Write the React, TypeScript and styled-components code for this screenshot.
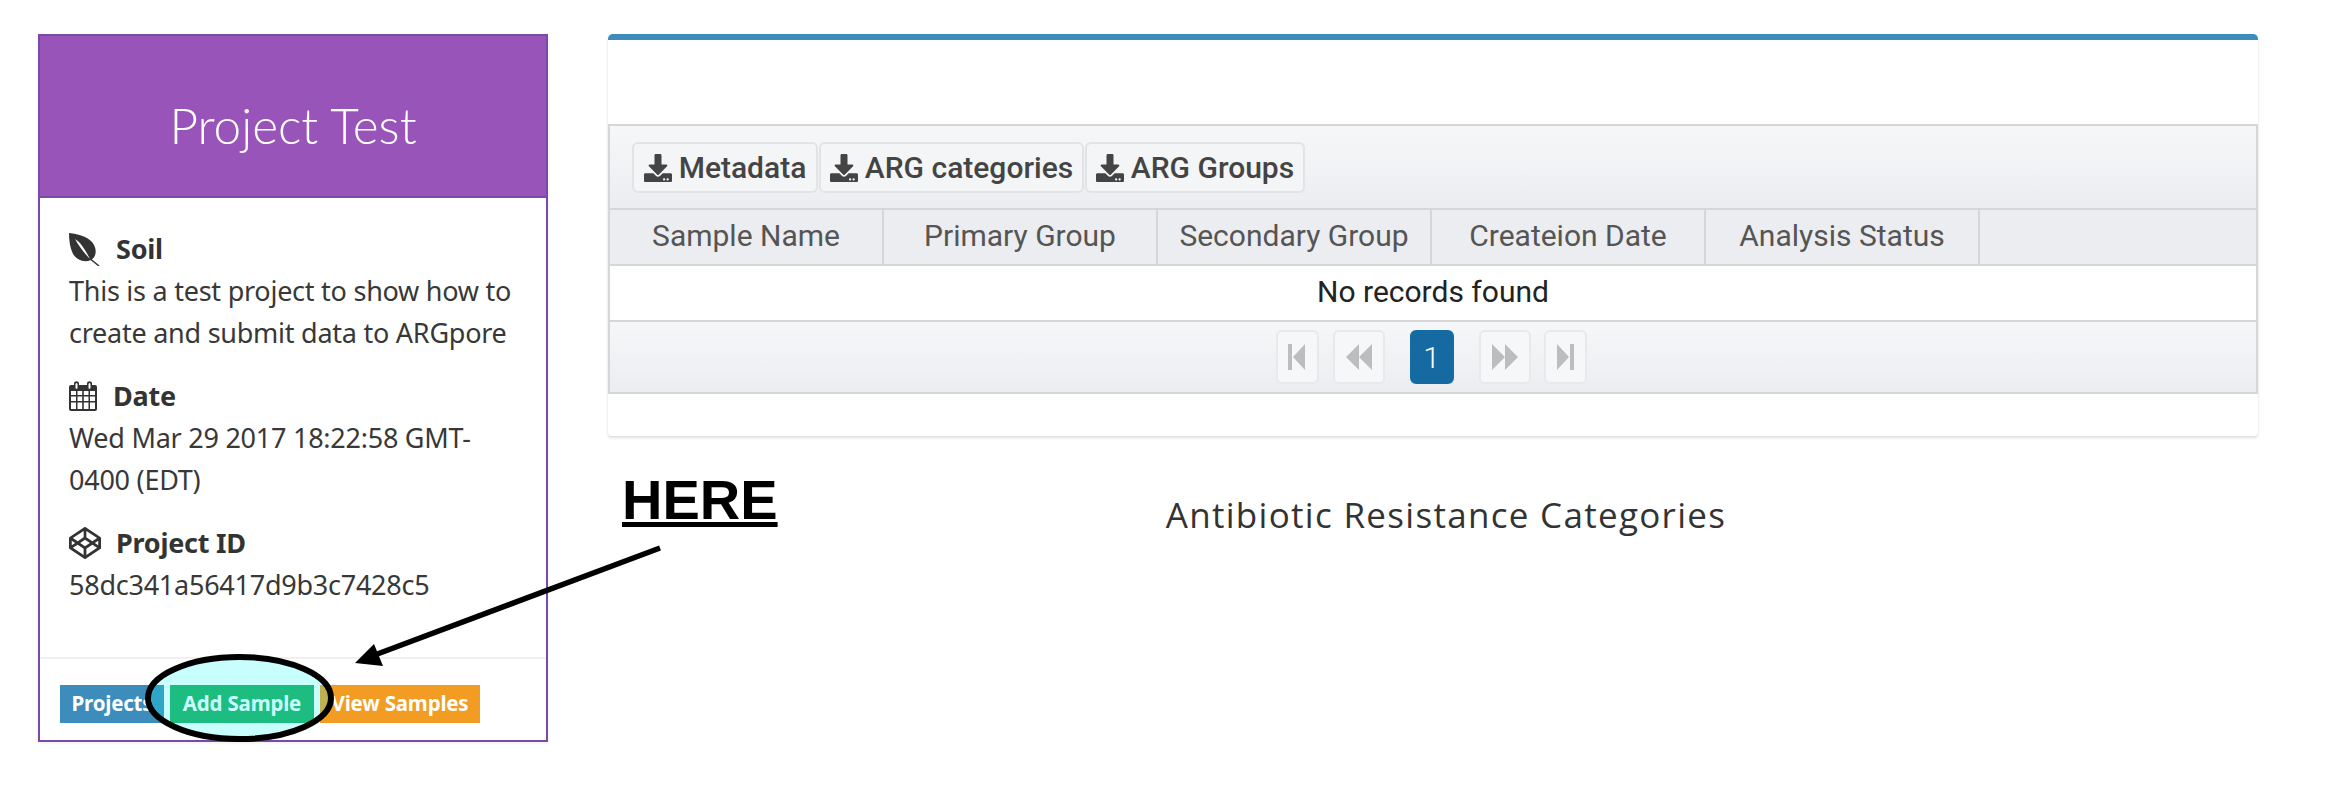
import { FC, ReactNode } from "react";
import styled, { createGlobalStyle } from "styled-components";
import { FaCodepen, FaDownload } from "react-icons/fa";

const GlobalStyle = createGlobalStyle`
    html, body {
        margin: 0;
        background: #fff;
    }
    body {
        font-family: "Noto Sans", "Liberation Sans", sans-serif;
    }
`;

const StyledPage = styled.div`
    position: relative;
    width: 2332px;
    height: 798px;
    box-sizing: border-box;
    padding: 34px 0 0 38px;
    display: flex;
    align-items: flex-start;
    gap: 60px;
    overflow: hidden;
`;

const StyledCard = styled.section`
    width: 510px;
    height: 708px;
    box-sizing: border-box;
    border: 2px solid #7a4aab;
    display: flex;
    flex-direction: column;
    box-shadow: 0 1px 3px rgba(0, 0, 0, 0.08);
`;

const StyledCardHeader = styled.header`
    height: 162px;
    flex: none;
    background: #9854b9;
    border-bottom: 2px solid #7a4aab;
    display: flex;
    align-items: center;
    justify-content: center;
    color: #fff;
    font-family: Lato, sans-serif;
    font-weight: 300;
    font-size: 49.5px;
    padding-top: 17px;
    box-sizing: border-box;
`;

const StyledCardBody = styled.div`
    flex: 1;
    padding: 30px 26px 0 29px;
    color: #383838;
    font-family: "Noto Sans", sans-serif;
    font-size: 27px;
    letter-spacing: -0.25px;
    line-height: 42px;
`;

const StyledField = styled.div`
    margin-bottom: 21px;
`;

const StyledFieldTitle = styled.div<{ $gap: number }>`
    display: flex;
    align-items: center;
    gap: ${(props) => props.$gap}px;
    font-weight: 700;
    color: #333;
    svg {
        flex: none;
        fill: #333;
    }
`;

const StyledCardFooter = styled.footer`
    height: 83px;
    flex: none;
    box-sizing: border-box;
    border-top: 2px solid #f0f0f0;
    padding: 26px 0 0 20px;
    display: flex;
    gap: 6px;
`;

const StyledCardButton = styled.div<{ $color: string; $width: number }>`
    width: ${(props) => props.$width}px;
    height: 38px;
    box-sizing: border-box;
    padding-bottom: 3px;
    background: ${(props) => props.$color};
    color: #fff;
    font-family: "Noto Sans", sans-serif;
    font-weight: 700;
    font-size: 20.5px;
    letter-spacing: -0.2px;
    display: flex;
    align-items: center;
    justify-content: center;
    white-space: nowrap;
    overflow: hidden;
`;

const StyledMain = styled.div`
    width: 1650px;
    display: flex;
    flex-direction: column;
`;

const StyledPanel = styled.section`
    height: 402px;
    box-sizing: border-box;
    background: #fff;
    border-top: 6px solid #3c8dbc;
    border-radius: 5px 5px 3px 3px;
    box-shadow: 0 2px 3px rgba(0, 0, 0, 0.12), 0 0 1px rgba(0, 0, 0, 0.12);
    padding-top: 84px;
`;

const StyledTable = styled.div`
    border: 2px solid #d6d6d6;
    font-family: Roboto, sans-serif;
`;

const StyledToolbar = styled.div`
    height: 84px;
    box-sizing: border-box;
    background: linear-gradient(#f6f7f9, #ebedf0);
    border-bottom: 2px solid #d6d6d6;
    padding: 16px 0 0 22px;
    display: flex;
    gap: 1px;
`;

const StyledExportButton = styled.div<{ $width: number }>`
    width: ${(props) => props.$width}px;
    height: 51px;
    box-sizing: border-box;
    background: #f4f5f6;
    border: 2px solid #e2e3e5;
    border-radius: 6px;
    display: flex;
    align-items: center;
    justify-content: center;
    gap: 7px;
    color: #444;
    font-weight: 500;
    font-size: 30px;
    white-space: nowrap;
    svg {
        flex: none;
    }
`;

const StyledHeaderRow = styled.div`
    height: 56px;
    box-sizing: border-box;
    padding-bottom: 3px;
    background: #ebedf0;
    border-bottom: 2px solid #d6d6d6;
    display: flex;
`;

const StyledHeaderCell = styled.div`
    width: 274px;
    margin-bottom: -3px;
    padding-bottom: 3px;
    box-sizing: border-box;
    border-right: 2px solid #d6d6d6;
    display: flex;
    align-items: center;
    justify-content: center;
    color: #555;
    font-size: 30px;
    white-space: nowrap;
`;

const StyledEmptyRow = styled.div`
    height: 56px;
    box-sizing: border-box;
    padding-bottom: 3px;
    border-bottom: 2px solid #d6d6d6;
    display: flex;
    align-items: center;
    justify-content: center;
    color: #222;
    font-size: 30px;
`;

const StyledPaginator = styled.div`
    height: 70px;
    box-sizing: border-box;
    padding-right: 4px;
    background: linear-gradient(#f6f7f9, #ebedf0);
    display: flex;
    justify-content: center;
    align-items: center;
`;

const StyledPageButton = styled.div<{ $width: number; $after: number; $active?: boolean }>`
    width: ${(props) => props.$width}px;
    height: 54px;
    margin-right: ${(props) => props.$after}px;
    box-sizing: border-box;
    border: 2px solid ${(props) => (props.$active ? "#136ca3" : "#e8e9eb")};
    border-radius: 6px;
    background: ${(props) => (props.$active ? "#156ba1" : "#f6f7f9")};
    color: #fff;
    font-size: 30px;
    font-weight: 300;
    display: flex;
    align-items: center;
    justify-content: center;
`;

const StyledSectionTitle = styled.h2`
    margin: 56px 0 0;
    padding-left: 26px;
    text-align: center;
    font-family: "Open Sans", sans-serif;
    font-weight: 400;
    font-size: 35px;
    line-height: 46px;
    letter-spacing: 1.3px;
    color: #333;
`;

const StyledHere = styled.div`
    position: absolute;
    left: 622px;
    top: 468px;
    font-family: "Liberation Sans", sans-serif;
    font-weight: 700;
    font-size: 56px;
    line-height: 64px;
    color: #000;
    text-decoration: underline;
`;

const StyledOverlay = styled.svg`
    position: absolute;
    left: 0;
    top: 0;
    pointer-events: none;
`;

const LeafIcon = () => (
    <svg width="31" height="33" viewBox="0 0 31 33">
        <path d="M0 0 C10 1 21 4 25 12 C28 18 27 24 22 27 C15 30 8 27 4 21 C1 15 0 8 0 0 Z" />
        <path d="M6 6 C11 12 13 20 22 26.500 L30 33" fill="none" stroke="#333" strokeWidth="1.500" />
        <path d="M6 6 C11 9 16 16 21 26 C15 20 10 13 6 6 Z" fill="#fff" />
    </svg>
);

const CalendarIcon = () => (
    <svg width="28" height="30" viewBox="0 0 28 30">
        <path
            fillRule="evenodd"
            d="M2 4 H5 V2.500 C5 -0.500 10 -0.500 10 2.500 V4 H18 V2.500 C18 -0.500 23 -0.500 23 2.500 V4 H26 Q28 4 28 6 V28 Q28 30 26 30 H2 Q0 30 0 28 V6 Q0 4 2 4 Z M6.500 3 V7 C6.500 8 8.500 8 8.500 7 V3 C8.500 2 6.500 2 6.500 3 Z M19.500 3 V7 C19.500 8 21.500 8 21.500 7 V3 C21.500 2 19.500 2 19.500 3 Z M2 10 V14 H7 V10 Z M8.500 10 V14 H13.200 V10 Z M14.800 10 V14 H19.500 V10 Z M21 10 V14 H26 V10 Z M2 15.500 V20 H7 V15.500 Z M8.500 15.500 V20 H13.200 V15.500 Z M14.800 15.500 V20 H19.500 V15.500 Z M21 15.500 V20 H26 V15.500 Z M2 21.500 V28 H7 V21.500 Z M8.500 21.500 V28 H13.200 V21.500 Z M14.800 21.500 V28 H19.500 V21.500 Z M21 21.500 V28 H26 V21.500 Z"
        />
    </svg>
);

const FirstIcon = () => (
    <svg width="18" height="26" viewBox="0 0 18 26" fill="#bcbdbe">
        <path d="M0 0 H4 V26 H0 Z M17 0 V26 L5 13 Z" />
    </svg>
);

const PrevIcon = () => (
    <svg width="26" height="26" viewBox="0 0 26 26" fill="#bcbdbe">
        <path d="M13 0 V26 L0 13 Z M26 0 V26 L13 13 Z" />
    </svg>
);

const NextIcon = () => (
    <svg width="26" height="26" viewBox="0 0 26 26" fill="#bcbdbe">
        <path d="M0 0 L13 13 L0 26 Z M13 0 L26 13 L13 26 Z" />
    </svg>
);

const LastIcon = () => (
    <svg width="18" height="26" viewBox="0 0 18 26" fill="#bcbdbe">
        <path d="M1 0 L13 13 L1 26 Z M14 0 H18 V26 H14 Z" />
    </svg>
);

interface IFieldProps {
    icon: ReactNode,
    title: string,
    gap: number,
    children: ReactNode
};

const Field: FC<IFieldProps> = ({ icon, title, gap, children }) => (
    <StyledField>
        <StyledFieldTitle $gap={gap}>{icon}{title}</StyledFieldTitle>
        {children}
    </StyledField>
);

const exportButtons = [
    { label: "Metadata", width: 186 },
    { label: "ARG categories", width: 265 },
    { label: "ARG Groups", width: 220 }
];

const columns = ["Sample Name", "Primary Group", "Secondary Group", "Createion Date", "Analysis Status"];

export default function App() {
    return (
        <StyledPage>
            <GlobalStyle />
            <StyledCard>
                <StyledCardHeader>Project Test</StyledCardHeader>
                <StyledCardBody>
                    <Field icon={<LeafIcon />} title="Soil" gap={16}>
                        This is a test project to show how to create and submit data to ARGpore
                    </Field>
                    <Field icon={<CalendarIcon />} title="Date" gap={16}>
                        Wed Mar 29 2017 18:22:58 GMT-0400 (EDT)
                    </Field>
                    <Field icon={<FaCodepen size={32} />} title="Project ID" gap={15}>
                        58dc341a56417d9b3c7428c5
                    </Field>
                </StyledCardBody>
                <StyledCardFooter>
                    <StyledCardButton $color="#3c8dbc" $width={104}>Projects</StyledCardButton>
                    <StyledCardButton $color="#24aa60" $width={144}>Add Sample</StyledCardButton>
                    <StyledCardButton $color="#f39c24" $width={160}>View Samples</StyledCardButton>
                </StyledCardFooter>
            </StyledCard>
            <StyledMain>
                <StyledPanel>
                    <StyledTable>
                        <StyledToolbar>
                            {exportButtons.map(button => (
                                <StyledExportButton key={button.label} $width={button.width}>
                                    <FaDownload size={28} />
                                    {button.label}
                                </StyledExportButton>
                            ))}
                        </StyledToolbar>
                        <StyledHeaderRow>
                            {columns.map(column => <StyledHeaderCell key={column}>{column}</StyledHeaderCell>)}
                        </StyledHeaderRow>
                        <StyledEmptyRow>No records found</StyledEmptyRow>
                        <StyledPaginator>
                            <StyledPageButton $width={43} $after={14}><FirstIcon /></StyledPageButton>
                            <StyledPageButton $width={52} $after={25}><PrevIcon /></StyledPageButton>
                            <StyledPageButton $width={44} $after={25} $active>1</StyledPageButton>
                            <StyledPageButton $width={52} $after={13}><NextIcon /></StyledPageButton>
                            <StyledPageButton $width={43} $after={0}><LastIcon /></StyledPageButton>
                        </StyledPaginator>
                    </StyledTable>
                </StyledPanel>
                <StyledSectionTitle>Antibiotic Resistance Categories</StyledSectionTitle>
            </StyledMain>
            <StyledHere>HERE</StyledHere>
            <StyledOverlay width="2332" height="798">
                <ellipse cx="239.500" cy="698" rx="91.500" ry="41" fill="rgba(5, 255, 241, 0.22)" stroke="#000" strokeWidth="6" />
                <path d="M660 548 L372 656" stroke="#000" strokeWidth="5.500" />
                <path d="M355 663 L374 644 L383 666 Z" fill="#000" />
            </StyledOverlay>
        </StyledPage>
    );
}
